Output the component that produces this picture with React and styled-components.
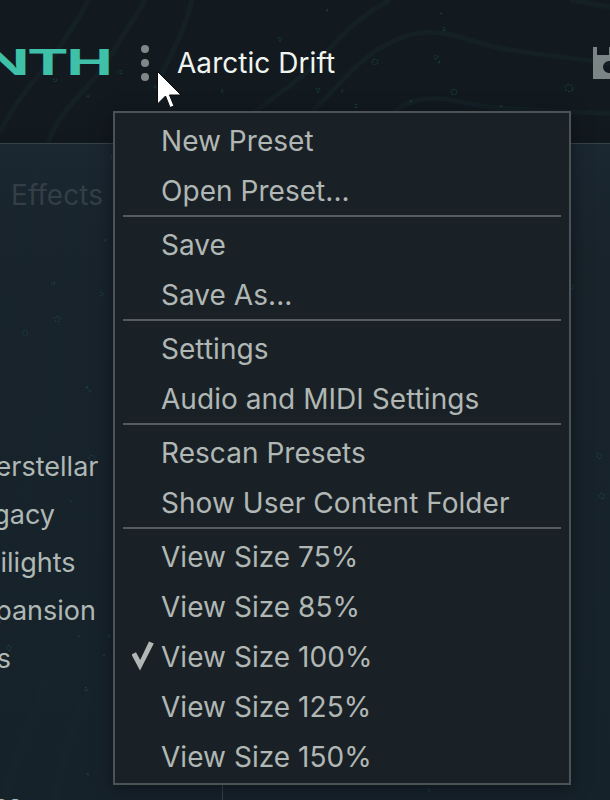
import React from 'react';
import styled, { createGlobalStyle } from 'styled-components';

const GlobalStyle = createGlobalStyle`
  *, *::before, *::after { box-sizing: border-box; }
  body { margin: 0; background: #17222a; font-family: Inter, sans-serif; overflow: hidden; }
`;

const Window = styled.div`
  position: relative;
  isolation: isolate;
  display: flex;
  flex-direction: column;
  width: 610px;
  height: 800px;
  overflow: hidden;
  background: linear-gradient(#121a20 0 115px, #11181d 143px, #1b2731 143px, #18232b 255px, #16222a 100%);
`;

const TopBar = styled.header`
  display: flex;
  align-items: flex-start;
  flex: none;
  height: 143px;
`;

const LogoBox = styled.div`
  flex: none;
  display: flex;
  justify-content: flex-end;
  width: 112px;
  height: 90px;
  padding: 40px 1px 0 0;
`;

const Logo = styled.span`
  flex: none;
  color: #3fc1a9;
  font-size: 36px;
  font-weight: 700;
  line-height: 44px;
  letter-spacing: -1.2px;
  white-space: nowrap;
  transform: scaleX(1.72);
  transform-origin: right center;
`;

const MenuButton = styled.button`
  display: flex;
  flex-direction: column;
  align-items: center;
  gap: 6px;
  width: 66px;
  padding: 45px 0 0;
  border: 0;
  background: none;
`;

const Dot = styled.i`
  width: 8px;
  height: 8px;
  border-radius: 50%;
  background: #7f8787;
`;

const PresetName = styled.h1`
  flex: 1;
  margin: 0 0 0 -1px;
  padding-top: 46px;
  color: #f0f4ee;
  font-size: 28px;
  font-weight: 400;
  line-height: 34px;
  letter-spacing: 0.05px;
`;

const SaveIcon = styled.svg`
  flex: none;
  width: 17px;
  height: 34px;
  margin-top: 46px;
`;

const Content = styled.main`
  display: flex;
  flex: 1;
  border-top: 1px solid #37434a;
`;

const Browser = styled.section`
  display: flex;
  flex-direction: column;
  flex: none;
  width: 223px;
`;

const Tab = styled.div`
  height: 299px;
  padding: 34px 0 0 11px;
  color: #333f46;
  font-size: 28px;
  line-height: 34px;
  letter-spacing: 0.05px;
`;

const BankList = styled.ul`
  display: flex;
  flex-direction: column;
  width: 120px;
  height: 288px;
  margin: 0;
  padding: 0;
  list-style: none;
`;

const Bank = styled.li`
  display: flex;
  flex: none;
  justify-content: flex-end;
  width: ${(p) => p.$right}px;
  height: 48px;
  color: #b0b8b5;
  font-size: 27px;
  line-height: 48px;
  white-space: nowrap;
`;

const Lower = styled.div`
  flex: 1;
  border-right: 1px solid #36424a;
  padding-top: 50px;
  overflow: hidden;
`;

const Backdrop = styled.svg`
  position: absolute;
  inset: 0;
  z-index: -1;
  width: 610px;
  height: 800px;
  pointer-events: none;
`;

const Menu = styled.nav`
  position: absolute;
  left: 113px;
  top: 111px;
  width: 458px;
  padding: 2px 8px;
  border: 2px solid #4b5355;
  background: #1a2126;
  box-shadow: 0 3px 16px rgba(5, 10, 16, 0.55);
`;

const MenuItem = styled.div`
  display: flex;
  align-items: center;
  height: 50px;
  padding-top: 1px;
  color: #b0b7b4;
  font-size: 28px;
  letter-spacing: 0.04px;
  line-height: 50px;
  white-space: nowrap;
`;

const CheckSlot = styled.span`
  display: flex;
  flex: none;
  align-items: center;
  width: 38px;
  padding: 0 0 2px 9px;
`;

const Separator = styled.hr`
  height: 2px;
  margin: 0 0 2px;
  border: 0;
  background: #555b5f;
`;

const Pointer = styled.svg`
  position: absolute;
  left: 156px;
  top: 70px;
  width: 28px;
  height: 40px;
`;

const GROUPS = [
  ['New Preset', 'Open Preset...'],
  ['Save', 'Save As...'],
  ['Settings', 'Audio and MIDI Settings'],
  ['Rescan Presets', 'Show User Content Folder'],
  ['View Size 75%', 'View Size 85%', 'View Size 100%', 'View Size 125%', 'View Size 150%'],
];

const BANKS = [
  ['Interstellar', 98.5],
  ['Legacy', 55],
  ['Twilights', 75.5],
  ['Expansion', 96],
  ['Keys', 11],
];

const SPECKS = [
  [55, 80, 1.6], [120, 72, 2], [88, 96, 1], [155, 87, 1.2], [280, 39, 2], [222, 91, 1.2],
  [318, 90, 2], [342, 91, 1.2], [356, 106, 1.5], [327, 10, 1], [441, 13, 0.8], [444, 29, 1.5],
  [436, 57, 2], [439, 62, 1], [375, 62, 3], [454, 92, 3], [411, 101, 1.2], [501, 106, 1],
  [569, 88, 4], [111, 157, 1.4], [105, 240, 1], [53, 283, 1.6], [102, 294, 2], [57, 319, 3],
  [25, 333, 3], [87, 387, 1], [90, 391, 1.3], [92, 458, 3], [71, 501, 0.7], [79, 636, 0.7],
  [109, 636, 1.5], [104, 655, 0.8], [9, 648, 2.5], [86, 689, 1.5], [88, 774, 0.9],
  [572, 287, 2], [599, 456, 2.6], [602, 496, 2.8], [429, 790, 1.5],
];

function Atmosphere() {
  return (
    <Backdrop viewBox="0 0 610 800" fill="none">
      <g stroke="#18292e" strokeOpacity="0.42" strokeWidth="5">
        <path d="M0 132C20 92 42 75 61 45S82 14 88 0" />
        <path d="M48 142C65 101 90 91 111 55S137 17 145 0" />
        <path d="M160 78C174 48 185 30 192 0" />
        <path d="M251 115C285 88 300 80 315 65S348 22 390 0" />
        <path d="M311 112C338 88 352 66 377 50C432 15 457 41 505 49C539 55 564 56 610 64" />
        <path d="M394 111C430 86 460 106 500 108S570 113 610 113" />
        <path d="M570 0L610 7" />
      </g>
      <g stroke="#15333c" strokeOpacity="0.09" strokeWidth="9">
        <path d="M36 170L22 246L8 330M73 190L68 260C68 300 52 380 49 420S30 460 25 500" />
        <path d="M45 680C32 730 12 757 5 800M91 690C65 735 65 763 54 800" />
      </g>
      <g stroke="#1e6b62" strokeOpacity="0.5" strokeWidth="0.9" strokeDasharray="2 1.4">
        {SPECKS.map(([x, y, r]) => (
          <ellipse key={`${x}-${y}`} cx={x} cy={y} rx={r} ry={r * 0.85} transform={`rotate(${(x * 7) % 90} ${x} ${y})`} />
        ))}
      </g>
    </Backdrop>
  );
}

export default function App() {
  return (
    <Window>
      <GlobalStyle />
      <Atmosphere />
      <TopBar>
        <LogoBox><Logo>NTH</Logo></LogoBox>
        <MenuButton aria-label="Preset menu"><Dot /><Dot /><Dot /></MenuButton>
        <PresetName>Aarctic Drift</PresetName>
        <SaveIcon viewBox="0 0 17 34">
          <path fillRule="evenodd" d="M0 1H4V9H16V1H32V33H0ZM16 15A6 6 0 1 0 16 27A6 6 0 1 0 16 15Z" fill="#7c8585" />
        </SaveIcon>
      </TopBar>
      <Content>
        <Browser>
          <Tab>Effects</Tab>
          <BankList>
            {BANKS.map(([name, right]) => <Bank key={name} $right={right}>{name}</Bank>)}
          </BankList>
          <Lower><Bank $right={22}>Bass</Bank></Lower>
        </Browser>
      </Content>
      <Menu>
        {GROUPS.map((group, i) => (
          <React.Fragment key={group[0]}>
            {i > 0 && <Separator />}
            {group.map((label) => (
              <MenuItem key={label}>
                <CheckSlot>
                  {label === 'View Size 100%' && (
                    <svg width="22" height="30" viewBox="0 0 22 30">
                      <path d="M-0.5 13.5L4 11.2L8.2 19L17 0.5L21.8 2.5L8 29.5Z" fill="#b0b7b4" />
                    </svg>
                  )}
                </CheckSlot>
                {label}
              </MenuItem>
            ))}
          </React.Fragment>
        ))}
      </Menu>
      <Pointer viewBox="0 0 28 40">
        <path d="M1.5 1.5V34L9.5 26L14 37.5L18 36L13.5 25H25Z" fill="#fff" stroke="#0a0d10" />
      </Pointer>
    </Window>
  );
}
